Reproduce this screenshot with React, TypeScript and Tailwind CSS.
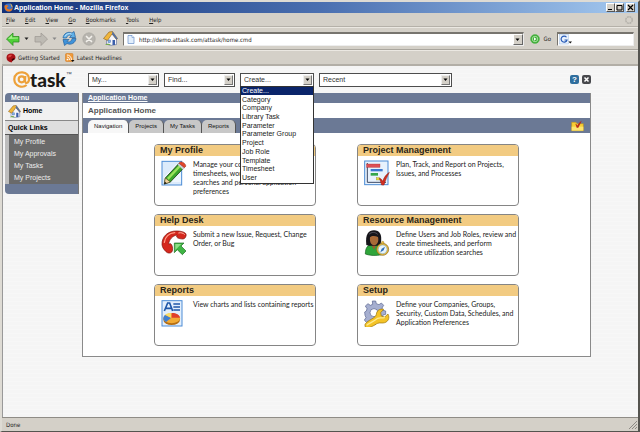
import React, { useState } from 'react';

const uiFont = "font-['DejaVu_Sans_Condensed','DejaVu_Sans',sans-serif]";
const pageFont = "font-['Liberation_Sans',Arial,sans-serif]";

const createOptions = [
  'Create...',
  'Category',
  'Company',
  'Library Task',
  'Parameter',
  'Parameter Group',
  'Project',
  'Job Role',
  'Template',
  'Timesheet',
  'User',
];

const menus = ['File', 'Edit', 'View', 'Go', 'Bookmarks', 'Tools', 'Help'];
const quickLinks = ['My Profile', 'My Approvals', 'My Tasks', 'My Projects'];
const tabs = ['Navigation', 'Projects', 'My Tasks', 'Reports'];

/* ---------- Browser icons ---------- */

const FirefoxIcon = () => (
  <svg width="9" height="9" viewBox="0 0 18 18">
    <circle cx="9" cy="9" r="8" fill="#3d6fc4" />
    <path d="M1 5c0 8 3 12 9 12 5 0 8-4 7-10-1 4-3 6-6 6-4 0-6-2-5-5l3-1-3-3z" fill="#e8761e" />
    <path d="M17 8c0-4-3-7-6-7 3 2 4 4 4 7z" fill="#f8c04a" />
  </svg>
);

const BackIcon = () => (
  <svg width="14" height="14" viewBox="0 0 28 28">
    <path d="M1 14 14 2v7h12v11H14v7z" fill="#4fd038" stroke="#2c8a20" strokeWidth="1.5" strokeLinejoin="round" />
    <path d="M4 14l8-8v5h12v2z" fill="#a5f08c" />
  </svg>
);

const ForwardIcon = () => (
  <svg width="14" height="14" viewBox="0 0 28 28">
    <path d="M27 14 14 2v7H2v11h12v7z" fill="#bdbab3" stroke="#9d9a94" strokeWidth="1.5" strokeLinejoin="round" />
  </svg>
);

const ReloadIcon = () => (
  <svg width="15" height="15" viewBox="0 0 30 30">
    <path d="M2 14C3 5 12 0 20 4l4-3 3 12H15l4-4c-5-2-9 0-10 5z" fill="#5fb0e8" stroke="#24609c" strokeWidth="1.4" strokeLinejoin="round" />
    <path d="M28 15c-1 9-10 14-18 10l-5 4-3-12h12l-4 4c5 2 9 0 10-6z" fill="#3f93da" stroke="#24609c" strokeWidth="1.4" strokeLinejoin="round" />
    <path d="M6 11c2-5 8-7 13-5" stroke="#c5e6fa" strokeWidth="2" fill="none" />
  </svg>
);

const StopIcon = () => (
  <svg width="14" height="14" viewBox="0 0 28 28">
    <circle cx="14" cy="14" r="12.5" fill="#b7b4ae" stroke="#a19e98" />
    <path d="M9 9l10 10M19 9L9 19" stroke="#f3f1ec" strokeWidth="3.4" strokeLinecap="round" />
  </svg>
);

const HouseIcon = ({ size }: { size: number }) => (
  <svg width={size} height={size} viewBox="0 0 30 30">
    <path d="M7 14l11-9 9 11v11l-12 2-8-3z" fill="#f6f5fa" stroke="#59689c" strokeWidth="1.2" />
    <path d="M1 15 12 2l7-1 10 14-2 2-9-11-9 13z" fill="#f0b63c" stroke="#8a5c17" strokeWidth="1.2" strokeLinejoin="round" />
    <path d="M18 6l9 11 2-2L19 1z" fill="#4d6fae" />
    <rect x="19" y="18" width="5" height="10" fill="#3b5ea9" />
    <rect x="10" y="18" width="5" height="5" fill="#86b6ea" stroke="#4a6da8" />
    <path d="M4 28c4-4 9-3 12 0z" fill="#74a94d" />
  </svg>
);

const PageIcon = () => (
  <svg width="8" height="9" viewBox="0 0 16 18">
    <path d="M2 1h8l4 4v12H2z" fill="#e3effc" stroke="#6a8fc9" strokeWidth="1.4" />
    <path d="M10 1v4h4" fill="#fff" stroke="#6a8fc9" strokeWidth="1.2" />
  </svg>
);

const GoIcon = () => (
  <svg width="10" height="10" viewBox="0 0 20 20">
    <circle cx="10" cy="10" r="9" fill="#3fae38" stroke="#58b552" />
    <circle cx="10" cy="10" r="5.5" fill="none" stroke="#bdeab5" strokeWidth="1.6" />
    <path d="M8 6.500l5 3.500-5 3.500z" fill="#fff" />
  </svg>
);

const GoogleIcon = () => (
  <svg width="13" height="11" viewBox="0 0 26 22">
    <rect x="1" y="1" width="18" height="19" fill="#e9f1fb" stroke="#9dbbe2" />
    <path d="M15 6.500A6 6 0 1 0 16 12h-5" fill="none" stroke="#2a5db8" strokeWidth="2.4" />
    <path d="M19 15h7l-3.500 4z" fill="#111" />
  </svg>
);

const RedBallIcon = () => (
  <svg width="10" height="10" viewBox="0 0 20 20">
    <path d="M10 1c6 0 9 4 9 8 0 3-2 4-4 4l-4 6C4 18 1 14 1 9s4-8 9-8z" fill="#a81217" />
    <path d="M5 5c2-2 5-2 7-1l-3 4-5 1z" fill="#dd4a44" />
    <path d="M11 13l4-3 3 2-5 4z" fill="#3c0507" />
  </svg>
);

const FeedIcon = () => (
  <svg width="10" height="10" viewBox="0 0 20 20">
    <rect x="1" y="1" width="15" height="16" rx="2" fill="#f09a3a" stroke="#cf7518" />
    <circle cx="5" cy="13" r="1.700" fill="#fff" />
    <path d="M4 8c3 0 5 2 5 6M4 4c5 0 9 4 9 10" stroke="#fff" strokeWidth="1.800" fill="none" />
    <path d="M12 14h7l-3.500 4z" fill="#111" />
  </svg>
);

const TinyArrow = ({ color }: { color: string }) => (
  <svg width="5" height="3" viewBox="0 0 10 6">
    <path d="M1 1h8L5 6z" fill={color} />
  </svg>
);

/* ---------- Page icons ---------- */

const PencilIcon = () => (
  <svg width="26" height="26" viewBox="0 0 78 78" className="shrink-0">
    <rect x="3" y="4" width="59" height="71" fill="#dcebfb" stroke="#4c8cd6" strokeWidth="3" />
    <path d="M9 52 46 12h14v54H9z" fill="#eef6fe" />
    <path d="M13 54 54 10l15 13-41 43-18 6z" fill="#3aa62b" stroke="#1d3f14" strokeWidth="2.500" strokeLinejoin="round" />
    <path d="M18 54 57 13l5 4-39 42z" fill="#9ae25a" />
    <path d="M13 54l15 12-18 6z" fill="#f3d5a0" stroke="#4a3413" strokeWidth="1.500" />
    <path d="M12 65l5 5-8 3z" fill="#111" />
    <path d="M50 14l6-7 17 14-7 8z" fill="#c9cfd6" />
    <path d="M55 8c5-7 21 3 19 11l-4 4L54 10z" fill="#e2462c" stroke="#8f2413" strokeWidth="1.500" />
  </svg>
);

const GanttIcon = () => (
  <svg width="26" height="26" viewBox="0 0 78 78" className="shrink-0">
    <rect x="2" y="3" width="70" height="71" fill="#e8f2fd" stroke="#4c8cd6" strokeWidth="3" />
    <path d="M10 9v58h56" stroke="#3d4a66" strokeWidth="3" fill="none" />
    <rect x="8" y="12" width="40" height="10" fill="#dd4f55" stroke="#a3262d" />
    <rect x="20" y="27" width="36" height="7" fill="#3b78d0" />
    <rect x="20" y="39" width="22" height="8" fill="#35a64a" />
    <rect x="37" y="53" width="10" height="7" fill="#e6da3d" stroke="#8c8520" />
    <path d="M46 55c5 0 8 5 10 9 4-12 10-20 20-27-7 13-12 25-16 38h-7c-2-8-5-14-7-20z" fill="#d32f22" stroke="#8c1a10" strokeWidth="1.500" />
  </svg>
);

const PhoneIcon = () => (
  <svg width="26" height="26" viewBox="0 0 78 78" className="shrink-0">
    <path
      d="M3 44C2 20 20 2 48 3c11 0 24 3 27 9 2 6-3 15-9 15-7 0-17-2-19-6l1-6c-13 2-24 14-25 27l6-1c5 3 7 14 5 22-3 8-13 8-19 2C8 58 4 52 3 44z"
      fill="#d5281e"
      stroke="#7d120c"
      strokeWidth="2"
    />
    <path d="M10 37c2-16 14-28 31-29" stroke="#ff9c86" strokeWidth="4" fill="none" strokeLinecap="round" />
    <path d="M52 9c8-2 15 0 19 5" stroke="#ffb5a4" strokeWidth="3" fill="none" />
    <path d="M40 39h29l-9 9 15 15-11 11-15-15-9 9z" fill="#3fb544" stroke="#1c6b22" strokeWidth="2" strokeLinejoin="round" />
    <path d="M43 42h18L43 60z" fill="#8fe088" />
  </svg>
);

const PersonIcon = () => (
  <svg width="26" height="26" viewBox="0 0 78 78" className="shrink-0">
    <path d="M4 72c0-20 8-29 25-29s24 9 24 31c-16 4-36 3-49-2z" fill="#2fa53a" stroke="#17601f" strokeWidth="2" />
    <path d="M20 42l10 17 8-17z" fill="#9a5f30" />
    <path d="M7 45C3 12 14 1 30 1s26 12 20 41l-8 5H14z" fill="#16151a" />
    <path d="M18 22c5-5 15-5 24-1 3 12-1 24-12 25-9-1-14-12-12-24z" fill="#a96a37" />
    <path d="M15 13C22 5 35 6 41 13" stroke="#55535e" strokeWidth="3" fill="none" />
    <circle cx="56" cy="58" r="18" fill="#e4b93f" stroke="#8b6718" strokeWidth="2" />
    <circle cx="56" cy="58" r="13" fill="#e8f4fb" stroke="#77a3bd" strokeWidth="1.500" />
    <path d="M63 50l-4 11-10 6 4-11z" fill="#2f6fb8" />
    <circle cx="56" cy="38" r="4" fill="#e4b93f" stroke="#8b6718" />
  </svg>
);

const ReportIcon = () => (
  <svg width="26" height="27" viewBox="0 0 78 81" className="shrink-0">
    <rect x="3" y="2" width="60" height="76" fill="#e3effc" stroke="#4c8cd6" strokeWidth="3" />
    <path d="M10 33 20 9h6l9 24M15 25h15" stroke="#1f57a8" strokeWidth="5" fill="none" />
    <path d="M37 12h20M37 21h20M37 30h20" stroke="#1f57a8" strokeWidth="4.500" />
    <ellipse cx="32" cy="59" rx="25" ry="16" fill="#b56e14" />
    <ellipse cx="32" cy="55" rx="25" ry="15" fill="#f1ab35" />
    <path d="M30 54 12 45c-9 9-5 17 3 21z" fill="#3f7fd0" />
    <path d="M32 53V39c14 0 24 6 25 14z" fill="#e0402c" />
    <path d="M30 53 12 44c4-3 11-5 18-5z" fill="#f7dc6a" />
  </svg>
);

const SetupIcon = () => (
  <svg width="26" height="27" viewBox="0 0 78 81" className="shrink-0">
    <path
      d="M25 3h10l2 8 8 3 7-5 7 7-5 8 3 7 8 2v10l-8 2-3 8 4 7-7 7-7-4-8 3-2 8H24l-2-8-7-3-7 5-7-8 5-7-3-7-1-10 5-3 2-7-5-8 8-7 7 5 7-3z"
      fill="#a6afd0"
      stroke="#56608c"
      strokeWidth="2"
      strokeLinejoin="round"
    />
    <circle cx="30" cy="38" r="12" fill="#fff" stroke="#56608c" strokeWidth="2" />
    <path
      d="M3 77c-2-6 6-12 25-23 3-2 8-6 9-11 1-11 10-18 22-15l-9 10 2 10 10 3 10-9c7 13-1 26-15 27-9 0-14-1-20 3-11 7-22 13-29 11-3-1-5-3-5-6z"
      fill="#f4c327"
      stroke="#9a7409"
      strokeWidth="2"
      strokeLinejoin="round"
    />
    <path d="M9 75c11-7 22-12 32-20 6-3 12 0 20-2" stroke="#fdeb92" strokeWidth="4" fill="none" strokeLinecap="round" />
  </svg>
);

const FolderIcon = () => (
  <svg width="13" height="12" viewBox="0 0 39 36">
    <path d="M2 7h13l3 4h19v21H2z" fill="#f7cf33" stroke="#c18e12" strokeWidth="1.500" />
    <path d="M2 20h35v12H2z" fill="#fde46f" />
    <path d="M13 11c3 0 5 3 6 6 3-7 7-11 13-15-3 8-7 14-10 21h-5c-1-4-2-8-4-12z" fill="#b9291c" />
  </svg>
);

const Logo = () => (
  <div className="flex h-5 w-[75px] items-center">
    <svg width="17" height="17" viewBox="0 0 51 51" className="shrink-0" role="img" aria-label="at">
      <path d="M41 42C29 52 5 47 4 26 3 10 17 3 28 4c13 1 20 10 20 21 0 9-6 12-10 10-3-2-2-6-1-20" fill="none" stroke="#eda13a" strokeWidth="6.500" />
      <circle cx="26" cy="25" r="9" fill="none" stroke="#eda13a" strokeWidth="6.500" />
    </svg>
    <span className="font-[Lato,sans-serif] text-[19px] leading-5 font-black text-[#1c1a17]">task</span>
    <span className="self-start text-[6px] leading-2 text-gray-700">™</span>
  </div>
);

/* ---------- Controls ---------- */

interface DropdownProps {
  label: string;
  options: string[];
  width: string;
}

const Dropdown: React.FC<DropdownProps> = ({ label, options, width }) => (
  <div className={`relative ${width}`}>
    <select
      aria-label={label}
      className="block h-[14px] w-full appearance-none border border-[#4d4d4d] bg-white pl-[3px] text-[7px] leading-3 text-[#333] outline-none"
    >
      {options.map((o) => (
        <option key={o}>{o}</option>
      ))}
    </select>
    <span className="pointer-events-none absolute top-[2px] right-[2px] flex h-[10px] w-[9px] items-center justify-center border border-t-[#eee] border-r-[#777] border-b-[#777] border-l-[#eee] bg-[#d4d0c8]">
      <TinyArrow color="#000" />
    </span>
  </div>
);

const CreateList = () => {
  const [selected, setSelected] = useState('Create...');

  return (
    <ul
      role="listbox"
      aria-label="Create options"
      className="absolute top-[13px] left-0 z-10 grid h-[98px] w-full auto-rows-fr border border-[#333] bg-white"
    >
      {createOptions.map((o) => (
        <li
          key={o}
          role="option"
          aria-selected={o === selected}
          onClick={() => setSelected(o)}
          className={`flex items-center pl-px text-[7px] leading-[8px] whitespace-nowrap ${
            o === selected ? 'bg-[#0a246a] text-white' : 'text-[#222]'
          }`}
        >
          {o}
        </li>
      ))}
    </ul>
  );
};

interface CardProps {
  title: string;
  icon: React.ReactNode;
  children: React.ReactNode;
}

const Card: React.FC<CardProps> = ({ title, icon, children }) => (
  <section className="h-[62px] overflow-hidden rounded-[4px] border border-[#858585] bg-white">
    <h2 className="h-[11px] bg-[#f2cb82] pl-[5px] text-[9px] leading-[11px] font-bold text-[#2a2416]">{title}</h2>
    <div className="flex gap-[6px] pt-1 pl-[6px]">
      {icon}
      <p className="font-[Lato,sans-serif] text-[7px] leading-[9px] text-[#222]">{children}</p>
    </div>
  </section>
);

/* ---------- Browser chrome ---------- */

const windowButton =
  'flex h-[9px] w-[9px] items-center justify-center border border-t-white border-r-[#555] border-b-[#555] border-l-white bg-[#d4d0c8]';

const TitleBar = () => (
  <div className="flex h-[11px] items-center bg-linear-to-r from-[#123078] via-[#4a6fb0] to-[#a6caf0] pr-[3px] pl-[2px]">
    <FirefoxIcon />
    <h1 className="flex-1 pl-px text-[7px] leading-[11px] font-bold text-white">Application Home - Mozilla Firefox</h1>
    <button aria-label="Minimize" className={windowButton}>
      <svg width="7" height="7" viewBox="0 0 7 7"><path d="M1 5h4v1H1z" /></svg>
    </button>
    <button aria-label="Maximize" className={windowButton}>
      <svg width="7" height="7" viewBox="0 0 7 7"><path d="M1 1.500h5v4.500H1z" fill="none" stroke="#000" /></svg>
    </button>
    <button aria-label="Close" className={`ml-[2px] ${windowButton}`}>
      <svg width="7" height="7" viewBox="0 0 7 7"><path d="M1 1l5 5M6 1L1 6" stroke="#000" strokeWidth="1.200" /></svg>
    </button>
  </div>
);

const MenuBar = () => (
  <nav className="flex h-[14px] items-center gap-[10px] border-b border-[#b5b1a9] pr-1 pl-1 text-[6px]">
    {menus.map((m) => (
      <button key={m}>
        <span className="underline">{m[0]}</span>
        {m.slice(1)}
      </button>
    ))}
    <svg width="10" height="10" viewBox="0 0 20 20" className="ml-auto">
      <circle cx="10" cy="10" r="6.500" fill="none" stroke="#b5b2ab" strokeWidth="3" strokeDasharray="4 1.100" />
    </svg>
  </nav>
);

const Toolbar = () => (
  <div className="flex h-[23px] items-center border-t border-b border-t-[#ebe8e2] border-b-[#aaa69e] pr-1 pl-1">
    <button aria-label="Back"><BackIcon /></button>
    <button aria-label="Back history" className="pl-[4px]"><TinyArrow color="#222" /></button>
    <button aria-label="Forward" className="pl-[5px]"><ForwardIcon /></button>
    <button aria-label="Forward history" className="pl-[4px]"><TinyArrow color="#888" /></button>
    <button aria-label="Reload" className="pl-[5px]"><ReloadIcon /></button>
    <button aria-label="Stop" className="pl-[5px]"><StopIcon /></button>
    <button aria-label="Home" className="pl-[7px]"><HouseIcon size={15} /></button>
    <div className="ml-[5px] flex h-[14px] flex-1 items-center gap-1 border border-t-2 border-t-[#77746e] border-r-[#eee] border-b-[#eee] border-l-[#77746e] bg-white pl-[3px]">
      <PageIcon />
      <input
        aria-label="Address"
        defaultValue="http://demo.attask.com/attask/home.cmd"
        className="h-[10px] min-w-0 flex-1 text-[6px] outline-none"
      />
      <button
        aria-label="Address history"
        className="flex h-[11px] w-[10px] items-center justify-center border border-t-white border-r-[#666] border-b-[#666] border-l-white bg-[#d4d0c8]"
      >
        <TinyArrow color="#000" />
      </button>
    </div>
    <button className="flex items-center gap-1 pr-[6px] pl-[6px] text-[6px]">
      <GoIcon />
      Go
    </button>
    <div className="flex h-[14px] w-[77px] items-center border border-t-2 border-t-[#77746e] border-r-[#eee] border-b-[#eee] border-l-[#77746e] bg-white pl-px">
      <GoogleIcon />
      <input aria-label="Search" className="h-[10px] min-w-0 flex-1 text-[6px] outline-none" />
    </div>
  </div>
);

const BookmarkBar = () => (
  <div className="flex h-[16px] items-center gap-[5px] border-t border-b-2 border-t-[#ebe8e2] border-b-[#b3afa7] pl-1 text-[6px]">
    <a href="#started" className="flex items-center gap-[2px]">
      <RedBallIcon />
      Getting Started
    </a>
    <a href="#headlines" className="flex items-center gap-[2px]">
      <FeedIcon />
      Latest Headlines
    </a>
  </div>
);

/* ---------- Page ---------- */

const TopBar = () => (
  <header className="flex h-[27px] items-center pr-[47px] pl-[10px]">
    <Logo />
    <div className="flex flex-1 gap-[5px]">
      <Dropdown label="My" options={['My...']} width="w-[71px]" />
      <Dropdown label="Find" options={['Find...']} width="w-[71px]" />
      <div className="relative">
        <Dropdown label="Create" options={createOptions} width="w-[74px]" />
        <CreateList />
      </div>
      <Dropdown label="Recent" options={['Recent']} width="w-[133px]" />
    </div>
    <div className="flex gap-[3px] text-[8px] font-bold text-white">
      <button aria-label="Help" className="flex h-[9px] w-[9px] items-center justify-center rounded-[2px] bg-[#2f6e9e] leading-[9px]">
        ?
      </button>
      <button aria-label="Close page" className="flex h-[9px] w-[9px] items-center justify-center rounded-[2px] bg-[#47484c]">
        <svg width="7" height="7" viewBox="0 0 7 7"><path d="M1.500 1.500l4 4M5.500 1.500l-4 4" stroke="#fff" strokeWidth="1.500" /></svg>
      </button>
    </div>
  </header>
);

const Sidebar = () => (
  <aside className="w-[74px] shrink-0 self-start border-r border-[#777]">
    <h2 className="h-[9px] rounded-tl-[4px] bg-[#6b7995] pl-[6px] text-[7px] leading-[9px] font-bold text-white">Menu</h2>
    <a href="#home" className="flex h-[19px] items-center gap-[2px] border-b border-[#888] bg-[#f1f1f1] pl-[3px] text-[7px] font-bold text-black">
      <HouseIcon size={13} />
      Home
    </a>
    <h2 className="h-[14px] border-b border-[#555] bg-[#dedede] pl-[3px] text-[7px] leading-[13px] font-bold text-black">Quick Links</h2>
    <ul className="flex h-[49px] flex-col justify-center border-l-4 border-[#bdbdbd] bg-[#6a6a6a] pl-[5px] text-[7px] leading-[12px] text-[#ececec]">
      {quickLinks.map((l) => (
        <li key={l}>
          <a href="#quick">{l}</a>
        </li>
      ))}
    </ul>
    <div className="h-[10px] rounded-bl-[4px] bg-[#6b7995]" />
  </aside>
);

const MainPanel = () => {
  const [active, setActive] = useState('Navigation');

  return (
    <main className="min-w-0 flex-1 self-start border border-t-0 border-[#8a8a8a] bg-white">
      <div className="h-[10px] bg-[#6b7995] pl-[5px] text-[7px] leading-[9px] font-bold text-white">
        <a href="#home" className="underline">Application Home</a>
      </div>
      <h2 className="h-[15px] pl-[5px] text-[8px] leading-[15px] font-bold text-[#555]">Application Home</h2>
      <div className="flex h-[15px] items-end bg-[#6b7995] pr-[6px] pl-[5px]">
        <div role="tablist" className="flex flex-1">
          {tabs.map((t) => (
            <button
              key={t}
              role="tab"
              aria-selected={t === active}
              onClick={() => setActive(t)}
              className={`h-[13px] rounded-t-[5px] border-r border-[#555] px-[6px] text-[6px] leading-[13px] text-[#111] ${
                t === active ? 'bg-[#f7f7f7]' : 'bg-[#c8c8c8]'
              }`}
            >
              {t}
            </button>
          ))}
        </div>
        <button aria-label="Bookmark this page" className="self-center">
          <FolderIcon />
        </button>
      </div>
      <div className="mx-auto grid w-[365px] grid-cols-2 gap-x-[41px] gap-y-2 pt-[11px] pb-[10px]">
        <Card title="My Profile" icon={<PencilIcon />}>
          Manage your contact info,
          <br />
          timesheets, work items, saved
          <br />
          searches and personal application
          <br />
          preferences
        </Card>
        <Card title="Project Management" icon={<GanttIcon />}>
          Plan, Track, and Report on Projects, Issues, and Processes
        </Card>
        <Card title="Help Desk" icon={<PhoneIcon />}>
          Submit a new Issue, Request, Change Order, or Bug
        </Card>
        <Card title="Resource Management" icon={<PersonIcon />}>
          Define Users and Job Roles, review and create timesheets, and perform resource utilization searches
        </Card>
        <Card title="Reports" icon={<ReportIcon />}>
          View charts and lists containing reports
        </Card>
        <Card title="Setup" icon={<SetupIcon />}>
          Define your Companies, Groups, Security, Custom Data, Schedules, and Application Preferences
        </Card>
      </div>
    </main>
  );
};

export default function App() {
  return (
    <div className={`flex min-h-screen flex-col border-t-2 border-r-2 border-b border-l-2 border-t-[#dedbd4] border-r-[#55544f] border-b-[#55544f] border-l-[#dedbd4] bg-[#d4d0c8] text-[#222] ${uiFont}`}>
      <div className={pageFont}>
        <TitleBar />
      </div>
      <MenuBar />
      <Toolbar />
      <BookmarkBar />
      <div
        className={`flex-1 border-l border-[#999] bg-[repeating-linear-gradient(#f5f5f5_0px,#f5f5f5_3px,#f7f7f7_3px,#f7f7f7_4px)] ${pageFont}`}
      >
        <TopBar />
        <div className="flex gap-[3px] pr-[47px] pl-[2px]">
          <Sidebar />
          <MainPanel />
        </div>
      </div>
      <footer className="flex h-[14px] items-center border-t border-[#8f8c86] text-[6px]">
        <p className="flex-1 pl-1">Done</p>
        <svg width="11" height="11" viewBox="0 0 11 11">
          <path d="M10 2L2 10M10 5L5 10M10 8L8 10" stroke="#8d8a84" />
        </svg>
      </footer>
    </div>
  );
}
